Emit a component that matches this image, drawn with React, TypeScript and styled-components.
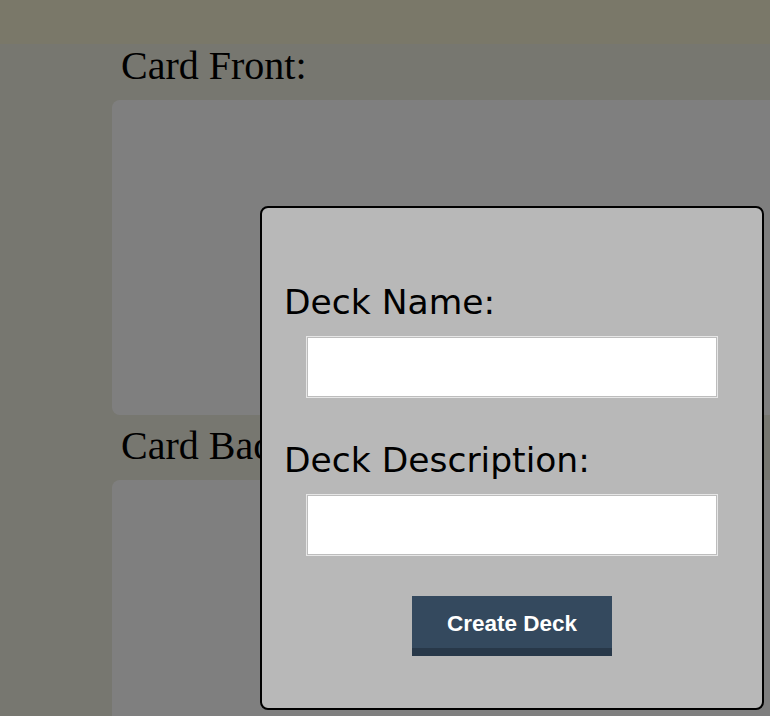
import styled, { createGlobalStyle } from 'styled-components';

const GlobalStyle = createGlobalStyle`
  * {
    box-sizing: border-box;
  }
  html, body {
    margin: 0;
    padding: 0;
    overflow: hidden;
    background: #eeeee0;
  }
`;

const App = () => {
  return (
    <>
      <GlobalStyle />
      <Page>
        <TopBar />
        <Editor>
          <SideLabel>Card Front:</SideLabel>
          <CardArea />
          <SideLabel $spaced>Card Back:</SideLabel>
          <CardArea />
        </Editor>
      </Page>

      <Overlay />
      <Modal>
        <FieldLabel>Deck Name:</FieldLabel>
        <TextInput type="text" />
        <FieldLabel $spaced>Deck Description:</FieldLabel>
        <TextInput type="text" />
        <CreateButton>Create Deck</CreateButton>
      </Modal>
    </>
  );
};

export default App;

const Page = styled.div`
  width: 100%;
  height: 716px;
  background: #eeeee0;
  overflow: hidden;
`;

const TopBar = styled.header`
  height: 44px;
  width: 100%;
  background: #f4f0d2;
`;

const Editor = styled.main`
  display: flex;
  flex-direction: column;
  padding-left: 112px;
`;

const SideLabel = styled.label<{ $spaced?: boolean }>`
  display: block;
  margin: ${({ $spaced }) => ($spaced ? '9px' : '0')} 0 12px 9px;
  font-family: 'Liberation Serif', 'Times New Roman', serif;
  font-size: 40px;
  line-height: 44px;
  color: #000;
`;

const CardArea = styled.div`
  width: 720px;
  height: 315px;
  flex-shrink: 0;
  background: #ffffff;
  border-radius: 8px;
`;

const Overlay = styled.div`
  position: fixed;
  inset: 0;
  background: rgba(0, 0, 0, 0.5);
`;

const Modal = styled.div`
  position: fixed;
  left: 260px;
  top: 206px;
  width: 504px;
  height: 504px;
  display: flex;
  flex-direction: column;
  padding: 74px 22px 0;
  background: #b8b8b8;
  border: 2px solid #000;
  border-radius: 8px;
`;

const FieldLabel = styled.label<{ $spaced?: boolean }>`
  display: block;
  margin-top: ${({ $spaced }) => ($spaced ? '42px' : '0')};
  font-family: 'DejaVu Sans', Verdana, sans-serif;
  font-size: 34.5px;
  line-height: 40px;
  color: #000;
`;

const TextInput = styled.input`
  align-self: center;
  width: 412px;
  height: 62px;
  margin-top: 14px;
  border: 1px solid #e6e6e6;
  box-shadow: inset 0 0 0 1px #bdbdbd;
  background: #fff;
  outline: none;
  font-size: 20px;
`;

const CreateButton = styled.button`
  align-self: center;
  width: 200px;
  height: 60px;
  margin-top: 40px;
  padding: 3px 0 0;
  border: none;
  border-bottom: 8px solid #283849;
  background: #34495e;
  color: #fff;
  font-family: 'Liberation Sans', Arial, sans-serif;
  font-size: 22.5px;
  font-weight: bold;
  cursor: pointer;
`;
